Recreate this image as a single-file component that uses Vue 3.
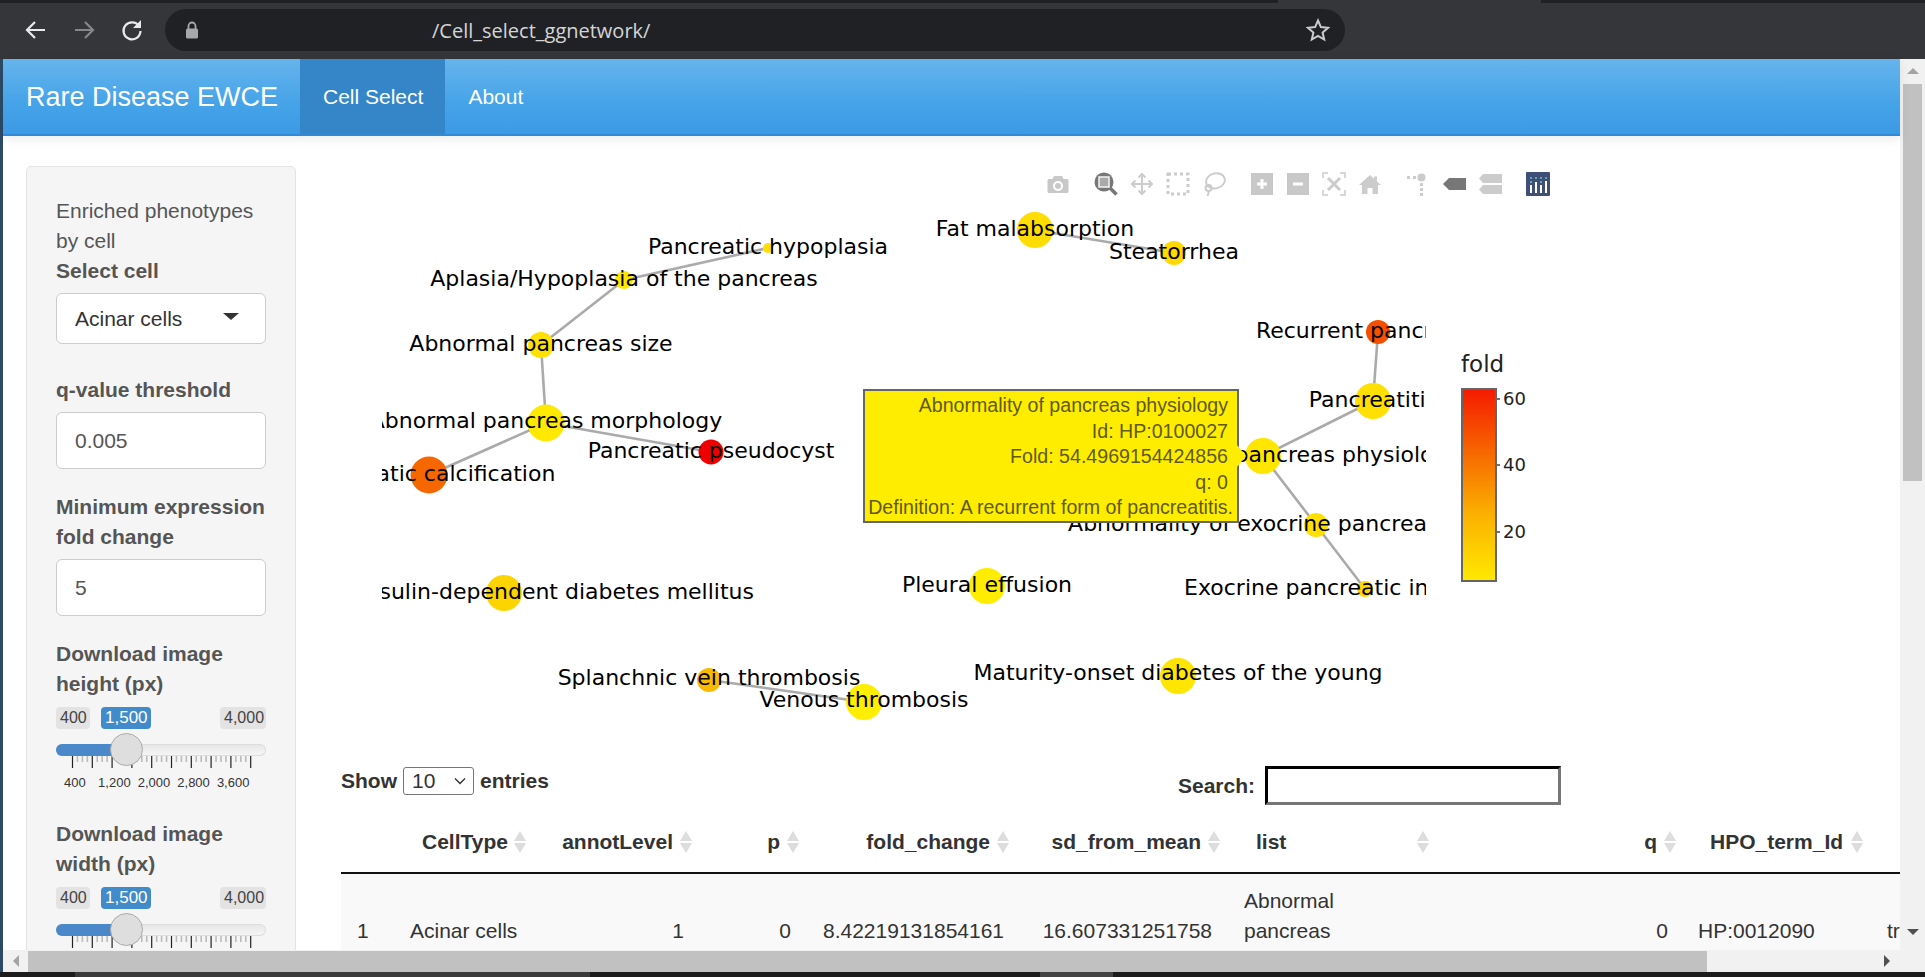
<template>
  <div class="screen">
    <!-- browser toolbar -->
    <div class="chrome">
      <div class="tabstrip"><div class="tab-notch"></div></div>
      <div class="toolbar">
        <svg class="cicon" viewBox="0 0 24 24"><path d="M21 12H4M11 4l-8 8 8 8" fill="none" stroke="#e8eaed" stroke-width="2.2" /></svg>
        <svg class="cicon" viewBox="0 0 24 24"><path d="M3 12h17M13 4l8 8-8 8" fill="none" stroke="#85878a" stroke-width="2.2" /></svg>
        <svg class="cicon" viewBox="0 0 24 24">
          <path d="M19 8a8.5 8.5 0 1 0 1.5 5" fill="none" stroke="#e8eaed" stroke-width="2.2" />
          <path d="M21 2v8h-8z" fill="#e8eaed" />
        </svg>
        <div class="address">
          <svg class="lock" viewBox="0 0 14 18">
            <path d="M3.5 8V5a3.5 3.5 0 0 1 7 0v3" fill="none" stroke="#a6a8ab" stroke-width="1.8" />
            <rect x="1" y="7.5" width="12" height="10" rx="1.5" fill="#a6a8ab" />
          </svg>
          <span class="url">/Cell_select_ggnetwork/</span>
          <svg class="star" viewBox="0 0 24 24">
            <path d="M12 2.5l2.9 6.6 7.1.7-5.4 4.7 1.6 7-6.2-3.7-6.2 3.7 1.6-7L2 9.8l7.1-.7z" fill="none" stroke="#c9cbce" stroke-width="2" />
          </svg>
        </div>
      </div>
    </div>

    <div class="window">
      <div class="strip"></div>
      <div class="page">
        <nav class="navbar">
          <span class="brand">Rare Disease EWCE</span>
          <a class="tab active">Cell Select</a>
          <a class="tab">About</a>
        </nav>

        <div class="content">
          <aside class="panel">
            <p class="intro">Enriched phenotypes<br />by cell</p>
            <label class="lbl">Select cell</label>
            <div class="dropdown">
              <span>Acinar cells</span>
              <i class="caret"></i>
            </div>

            <label class="lbl spaced">q-value threshold</label>
            <input class="field" value="0.005" />

            <label class="lbl spaced2">Minimum expression<br />fold change</label>
            <input class="field" value="5" />

            <div v-for="s in sliders" :key="s.label" class="slider-block">
              <label class="lbl">Download image<br />{{ s.label }}</label>
              <div class="pills">
                <span class="pill min">400</span>
                <span class="pill val">1,500</span>
                <span class="pill max">4,000</span>
              </div>
              <div class="rail">
                <div class="rail-fill"></div>
                <div class="handle"></div>
              </div>
              <svg class="ticks" width="210" height="12">
                <line
                  v-for="t in ticks"
                  :key="t.x"
                  :x1="t.x"
                  :x2="t.x"
                  y1="0"
                  :y2="t.major ? 12 : 6"
                  :stroke="t.major ? '#222' : '#bbb'"
                  :stroke-width="t.major ? 1.2 : 1.6"
                />
              </svg>
              <div class="tick-labels">
                <span v-for="l in tickLabels" :key="l">{{ l }}</span>
              </div>
            </div>
          </aside>

          <main class="main">
            <div class="plot">
              <svg class="net" width="1559" height="610" viewBox="341 136 1559 610">
                <defs>
                  <clipPath id="netclip"><rect x="382" y="160" width="1044" height="590" /></clipPath>
                  <linearGradient id="foldbar" x1="0" y1="0" x2="0" y2="1">
                    <stop offset="0" stop-color="#f51a00" />
                    <stop offset="0.35" stop-color="#f76c00" />
                    <stop offset="0.65" stop-color="#fbb000" />
                    <stop offset="1" stop-color="#ffe900" />
                  </linearGradient>
                </defs>
                <g clip-path="url(#netclip)">
                  <line
                    v-for="e in edgeLines"
                    :key="e.id"
                    :x1="e.x1"
                    :y1="e.y1"
                    :x2="e.x2"
                    :y2="e.y2"
                    stroke="#aaa"
                    stroke-width="2.6"
                  />
                  <circle v-for="n in nodes" :key="n.id" :cx="n.x" :cy="n.y" :r="n.r" :fill="n.c" />
                  <text
                    v-for="n in nodes"
                    :key="n.id + '-t'"
                    class="node-label"
                    :x="n.lx || n.x"
                    :y="n.y + (n.dy || 6)"
                    :text-anchor="n.lx ? 'end' : 'middle'"
                  >{{ n.label }}</text>
                </g>
                <text class="legend-title" x="1461" y="372">fold</text>
                <rect x="1462" y="389" width="34" height="192" fill="url(#foldbar)" stroke="#666" stroke-width="2" />
                <g v-for="t in legendTicks" :key="t.v">
                  <line x1="1497" x2="1500" :y1="t.y" :y2="t.y" stroke="#444" stroke-width="1.5" />
                  <text class="legend-tick" x="1503" :y="t.y + 6">{{ t.v }}</text>
                </g>
              </svg>

              <div class="modebar">
                <div class="mb-group">
                  <svg class="mb" viewBox="0 0 24 24">
                    <path d="M8 4h8l1.5 3H21a1.5 1.5 0 0 1 1.5 1.5v11A1.5 1.5 0 0 1 21 21H3a1.5 1.5 0 0 1-1.5-1.5v-11A1.5 1.5 0 0 1 3 7h3.5z" fill="#c8c8c8" />
                    <circle cx="12" cy="14" r="5" fill="#fff" />
                    <circle cx="12" cy="14" r="3" fill="#c8c8c8" />
                  </svg>
                </div>
                <div class="mb-group">
                  <svg class="mb" viewBox="0 0 24 24">
                    <path d="M16 16l6.5 6.5" stroke="#777" stroke-width="3.5" />
                    <circle cx="10" cy="10" r="9.5" fill="#777" />
                    <rect x="5" y="5" width="10" height="10" fill="#aaa" stroke="#eee" stroke-width="1.6" />
                  </svg>
                  <svg class="mb" viewBox="0 0 24 24">
                    <path d="M12 2v20M2 12h20M8.5 5.5L12 2l3.5 3.5M8.5 18.5L12 22l3.5-3.5M5.5 8.5L2 12l3.5 3.5M18.5 8.5L22 12l-3.5 3.5" fill="none" stroke="#ccc" stroke-width="2" />
                  </svg>
                  <svg class="mb" viewBox="0 0 24 24">
                    <rect x="2" y="2" width="20" height="20" fill="none" stroke="#ccc" stroke-width="3" stroke-dasharray="3 3" />
                  </svg>
                  <svg class="mb" viewBox="0 0 24 24">
                    <ellipse cx="13.5" cy="9" rx="9.5" ry="7.5" fill="none" stroke="#ccc" stroke-width="2" transform="rotate(-15 13 9)" />
                    <circle cx="6.5" cy="16" r="3" fill="none" stroke="#ccc" stroke-width="2" />
                    <path d="M7 19l-1.5 5" stroke="#ccc" stroke-width="2" />
                  </svg>
                </div>
                <div class="mb-group">
                  <svg class="mb" viewBox="0 0 24 24">
                    <rect x="1" y="1" width="22" height="22" fill="#c8c8c8" />
                    <path d="M12 7v10M7 12h10" stroke="#fff" stroke-width="3" />
                  </svg>
                  <svg class="mb" viewBox="0 0 24 24">
                    <rect x="1" y="1" width="22" height="22" fill="#c8c8c8" />
                    <path d="M7 12h10" stroke="#fff" stroke-width="3" />
                  </svg>
                  <svg class="mb" viewBox="0 0 24 24">
                    <path d="M6 1H1v5M18 1h5v5M6 23H1v-5M18 23h5v-5" fill="none" stroke="#ccc" stroke-width="1.5" />
                    <path d="M6 6l12 12M18 6L6 18" stroke="#ccc" stroke-width="3" />
                  </svg>
                  <svg class="mb" viewBox="0 0 24 24">
                    <path d="M12 3L1 13h3v9h5.5v-6h5v6H20v-9h3l-4-3.6V4.5h-3v2.2z" fill="#ccc" />
                  </svg>
                </div>
                <div class="mb-group">
                  <svg class="mb" viewBox="0 0 24 24">
                    <rect x="1" y="4" width="3" height="3" fill="#ccc" />
                    <rect x="7" y="4" width="3" height="3" fill="#ccc" />
                    <circle cx="15.5" cy="5.5" r="4" fill="#ccc" />
                    <rect x="14" y="11" width="3" height="3" fill="#ccc" />
                    <rect x="14" y="16" width="3" height="3" fill="#ccc" />
                    <rect x="14" y="21" width="3" height="3" fill="#ccc" />
                  </svg>
                  <svg class="mb" viewBox="0 0 24 24">
                    <path d="M1 12l6-6h17v12H7z" fill="#777" />
                  </svg>
                  <svg class="mb" viewBox="0 0 24 24">
                    <path d="M5 2h19v9H5L1 6.5zM5 13h19v9H5l-4-4.5z" fill="#ccc" />
                  </svg>
                </div>
                <div class="mb-group">
                  <svg class="mb" viewBox="0 0 24 24">
                    <rect width="24" height="24" rx="1" fill="#3f4f75" />
                    <g fill="#69c8c8">
                      <circle cx="5" cy="6" r="1" /><circle cx="10" cy="6" r="1" /><circle cx="15" cy="6" r="1" /><circle cx="20" cy="6" r="1" />
                    </g>
                    <g fill="#69c8c8"><circle cx="5" cy="10" r="1" /><circle cx="15" cy="10" r="1" /></g>
                    <path d="M5 13v8M10 10v11M15 13v8M20 9v12" stroke="#fff" stroke-width="2" />
                  </svg>
                </div>
              </div>

              <div class="hover">
                <div>Abnormality of pancreas physiology</div>
                <div>Id: HP:0100027</div>
                <div>Fold: 54.4969154424856</div>
                <div>q: 0</div>
                <div>Definition: A recurrent form of pancreatitis.</div>
              </div>
            </div>

            <div class="dt-controls">
              <div class="dt-length">
                Show
                <span class="dt-select">
                  10
                  <svg width="14" height="9" viewBox="0 0 14 9"><path d="M2 1.5l5 5 5-5" fill="none" stroke="#333" stroke-width="1.4" /></svg>
                </span>
                entries
              </div>
              <div class="dt-search">
                Search:
                <input class="dt-input" />
              </div>
            </div>

            <table class="dt">
              <colgroup>
                <col v-for="c in columns" :key="c.key" :style="{ width: c.w + 'px' }" />
              </colgroup>
              <thead>
                <tr>
                  <th v-for="c in columns" :key="c.key" :class="[c.key, { num: c.num, sortable: c.sort }]">
                    {{ c.title }}
                  </th>
                </tr>
              </thead>
              <tbody>
                <tr>
                  <td>1</td>
                  <td>Acinar cells</td>
                  <td class="num">1</td>
                  <td class="num">0</td>
                  <td class="num">8.42219131854161</td>
                  <td class="num">16.607331251758</td>
                  <td><span class="wrap">Abnormal pancreas morphology</span></td>
                  <td class="num">0</td>
                  <td class="hpo">HP:0012090</td>
                  <td>tr</td>
                </tr>
              </tbody>
            </table>
          </main>
        </div>

        <div class="hscroll">
          <span class="hbtn"><i class="arr-left"></i></span>
          <div class="hthumb"></div>
          <i class="arr-right"></i>
        </div>
      </div>

      <div class="vscroll">
        <i class="arr-up"></i>
        <div class="vthumb"></div>
        <i class="arr-down"></i>
      </div>
    </div>

    <div class="taskbar">
      <span class="tb-a"></span>
      <span class="tb-b"></span>
      <span class="tb-c"></span>
      <span class="tb-d"></span>
    </div>
  </div>
</template>

<script setup>
import { computed } from "vue";

const sliders = [{ label: "height (px)" }, { label: "width (px)" }];
const tickLabels = ["400", "1,200", "2,000", "2,800", "3,600"];

// major tick every 19.8px, three minor ticks in between
const ticks = [];
for (let i = 0; i < 37; i++) {
  ticks.push({ x: 16.5 + i * 4.95, major: i % 4 === 0 });
}

const legendTicks = [
  { v: 60, y: 399 },
  { v: 40, y: 465 },
  { v: 20, y: 532 },
];

// node positions are page coordinates, the svg viewBox is set up to match
const nodes = [
  { id: "hypo", x: 768, y: 248, r: 5, c: "#ffdf00", label: "Pancreatic hypoplasia" },
  { id: "aplasia", x: 624, y: 280, r: 9, c: "#ffe600", label: "Aplasia/Hypoplasia of the pancreas" },
  { id: "size", x: 541, y: 345, r: 13, c: "#ffe100", label: "Abnormal pancreas size" },
  { id: "morph", x: 546, y: 423, r: 18.5, c: "#ffe900", label: "Abnormal pancreas morphology", dy: 5 },
  { id: "calc", x: 429, y: 475, r: 18.5, c: "#f76700", label: "Pancreatic calcification" },
  { id: "pseudo", x: 711, y: 452, r: 12.5, c: "#ee0000", label: "Pancreatic pseudocyst" },
  { id: "fat", x: 1035, y: 230, r: 18, c: "#ffdd00", label: "Fat malabsorption" },
  { id: "steat", x: 1174, y: 253, r: 12, c: "#ffd900", label: "Steatorrhea" },
  { id: "recur", x: 1378, y: 332, r: 12, c: "#f74f00", label: "Recurrent pancreatitis" },
  { id: "pancr", x: 1373, y: 401, r: 18, c: "#ffe000", label: "Pancreatitis" },
  { id: "physio", x: 1263, y: 456, r: 18, c: "#ffe600", label: "Abnormality of pancreas physiology" },
  { id: "exo", x: 1316, y: 525, r: 12, c: "#ffe000", label: "Abnormality of exocrine pancreas physiology" },
  { id: "insuff", x: 1365, y: 589, r: 8, c: "#ffd800", label: "Exocrine pancreatic insufficiency" },
  { id: "pleural", x: 987, y: 586, r: 18, c: "#ffed00", label: "Pleural effusion" },
  { id: "insulin", x: 504, y: 593, r: 18, c: "#fcd500", label: "Noninsulin-dependent diabetes mellitus", lx: 754 },
  { id: "splanch", x: 709, y: 680, r: 12, c: "#fbb900", label: "Splanchnic vein thrombosis", dy: 5 },
  { id: "venous", x: 864, y: 702, r: 18, c: "#ffee00", label: "Venous thrombosis", dy: 5 },
  { id: "mody", x: 1178, y: 676, r: 18, c: "#ffe600", label: "Maturity-onset diabetes of the young", dy: 4 },
];

const edges = [
  ["hypo", "aplasia"],
  ["aplasia", "size"],
  ["size", "morph"],
  ["morph", "calc"],
  ["morph", "pseudo"],
  ["fat", "steat"],
  ["recur", "pancr"],
  ["pancr", "physio"],
  ["physio", "exo"],
  ["exo", "insuff"],
  ["splanch", "venous"],
];

const edgeLines = computed(() =>
  edges.map(([a, b]) => {
    const from = nodes.find((n) => n.id === a);
    const to = nodes.find((n) => n.id === b);
    return { id: a + b, x1: from.x, y1: from.y, x2: to.x, y2: to.y };
  })
);

const columns = [
  { key: "row", title: "", w: 53 },
  { key: "cell", title: "CellType", w: 140, sort: true },
  { key: "annot", title: "annotLevel", w: 166, num: true, sort: true },
  { key: "p", title: "p", w: 107, num: true, sort: true },
  { key: "fold", title: "fold_change", w: 210, num: true, sort: true },
  { key: "sd", title: "sd_from_mean", w: 211, num: true, sort: true },
  { key: "list", title: "list", w: 209, sort: true },
  { key: "q", title: "q", w: 247, num: true, sort: true },
  { key: "hpo", title: "HPO_term_Id", w: 187, sort: true },
  { key: "rest", title: "", w: 200 },
];
</script>

<style scoped>
.screen {
  width: 1925px;
  height: 977px;
  display: flex;
  flex-direction: column;
  overflow: hidden;
  background: #fff;
  font-family: "Liberation Sans", Arial, sans-serif;
  font-size: 21px;
  color: #555;
}

/* browser */
.chrome {
  height: 59px;
  flex: none;
  background: #35363a;
}
.tabstrip {
  height: 3px;
  background: #202124;
}
.tab-notch {
  width: 263px;
  height: 3px;
  margin-left: 1278px;
  background: #35363a;
}
.toolbar {
  display: flex;
  align-items: center;
  gap: 24px;
  height: 54px;
  padding-left: 24px;
}
.cicon {
  width: 24px;
  height: 24px;
}
.address {
  display: flex;
  align-items: center;
  width: 1180px;
  height: 42px;
  margin-left: -3px;
  border-radius: 21px;
  background: #202124;
}
.lock {
  width: 14px;
  height: 18px;
  margin-left: 20px;
}
.url {
  margin-left: 233px;
  font-family: "Open Sans", sans-serif;
  font-size: 20px;
  color: #d4d5d7;
}
.star {
  width: 24px;
  height: 24px;
  margin-left: auto;
  margin-right: 15px;
}

.window {
  flex: 1;
  display: flex;
  min-height: 0;
}
.strip {
  width: 3px;
  flex: none;
  background: #2c4a66;
}
.page {
  flex: 1;
  min-width: 0;
  display: flex;
  flex-direction: column;
}

/* navbar */
.navbar {
  flex: none;
  display: flex;
  align-items: flex-start;
  height: 75px;
  border-bottom: 2px solid #3189d8;
  background: linear-gradient(#66b4ec, #45a3e8 60%, #3b9ae4);
  box-shadow: 0 3px 10px rgba(0, 0, 0, 0.08);
  color: #fff;
  position: relative;
}
.brand {
  width: 297px;
  padding-left: 23px;
  box-sizing: border-box;
  line-height: 76px;
  font-size: 27px;
}
.tab {
  padding: 0 23px;
  line-height: 75px;
}
.tab.active {
  background: #3585c9;
  padding-right: 22px;
}

.content {
  flex: 1;
  display: flex;
  align-items: flex-start;
  min-height: 0;
  overflow: hidden;
}

/* sidebar */
.panel {
  flex: none;
  box-sizing: border-box;
  width: 270px;
  margin: 30px 45px 0 23px;
  padding: 29px 29px 0;
  border: 1px solid #e3e3e3;
  border-radius: 5px;
  background: #f5f5f5;
  line-height: 30px;
}
.intro {
  margin: 0;
}
.lbl {
  display: block;
  font-weight: 700;
}
.spaced {
  margin-top: 31px;
}
.spaced2 {
  margin-top: 23px;
}
.dropdown {
  display: flex;
  align-items: center;
  justify-content: space-between;
  box-sizing: border-box;
  height: 51px;
  margin-top: 7px;
  padding: 0 26px 0 18px;
  border: 1px solid #ccc;
  border-radius: 6px;
  background: #fff;
  color: #333;
}
.caret {
  width: 0;
  height: 0;
  margin-bottom: 5px;
  border-left: 8px solid transparent;
  border-right: 8px solid transparent;
  border-top: 7px solid #333;
}
.field {
  display: block;
  box-sizing: border-box;
  width: 100%;
  height: 57px;
  margin-top: 7px;
  padding: 0 18px;
  border: 1px solid #ccc;
  border-radius: 6px;
  background: #fff;
  color: #555;
  font: inherit;
}
.slider-block {
  height: 180px;
  padding-top: 23px;
  box-sizing: border-box;
}
.pills {
  display: flex;
  height: 22px;
  margin-top: 8px;
  font-size: 16px;
  line-height: 22px;
}
.pill {
  padding: 0 4px;
  border-radius: 4px;
  background: #e3e3e3;
  color: #444;
  text-align: center;
}
.pill.min {
  width: 34px;
  box-sizing: border-box;
}
.pill.val {
  width: 50px;
  box-sizing: border-box;
  margin-left: 11px;
  background: #428bca;
  color: #fff;
  font-size: 17px;
}
.pill.max {
  margin-left: auto;
  width: 46px;
  box-sizing: border-box;
}
.rail {
  position: relative;
  height: 12px;
  margin-top: 15px;
  border-radius: 6px;
  background: linear-gradient(#e6e6e6, #f6f6f6);
  box-shadow: inset 0 0 0 1px #ddd;
}
.rail-fill {
  width: 71px;
  height: 12px;
  border-radius: 6px 0 0 6px;
  background: #4a88c9;
}
.handle {
  position: absolute;
  left: 54px;
  top: -11px;
  box-sizing: border-box;
  width: 33px;
  height: 33px;
  border: 1px solid #aaa;
  border-radius: 50%;
  background: #dedede;
}
.ticks {
  display: block;
}
.tick-labels {
  display: flex;
  margin-left: -1px;
  font-size: 13px;
  line-height: 18px;
  margin-top: 6px;
  color: #333;
}
.tick-labels span {
  flex: none;
  width: 39.6px;
  text-align: center;
}

/* main column */
.main {
  flex: 1;
  min-width: 0;
  overflow: hidden;
}
.plot {
  position: relative;
  height: 610px;
}
.net {
  display: block;
}
.node-label {
  font-family: "DejaVu Sans", sans-serif;
  font-size: 22px;
  fill: #000;
}
.legend-title {
  font-family: "DejaVu Sans", sans-serif;
  font-size: 23px;
  fill: #222;
}
.legend-tick {
  font-family: "DejaVu Sans", sans-serif;
  font-size: 18px;
  fill: #222;
}
.modebar {
  position: absolute;
  left: 705px;
  top: 36px;
  display: flex;
  gap: 24px;
}
.mb-group {
  display: flex;
  gap: 12px;
}
.mb {
  display: block;
  width: 24px;
  height: 24px;
}
.hover {
  position: absolute;
  left: 522px;
  top: 253px;
  box-sizing: border-box;
  width: 376px;
  height: 134px;
  padding: 2px 3px 0 0;
  border: 2px solid #666;
  background: #ffed00;
  color: #5f5a10;
  font-size: 19.6px;
  line-height: 25.5px;
  text-align: right;
  white-space: nowrap;
}
.hover div {
  padding-right: 6px;
}
.hover div:last-child {
  padding-right: 1px;
}
.hover::after {
  content: "";
  position: absolute;
  left: 100%;
  top: 54px;
  border-top: 11px solid transparent;
  border-bottom: 11px solid transparent;
  border-left: 9px solid #ffed00;
}

/* data table */
.dt-controls {
  display: flex;
  justify-content: space-between;
  align-items: flex-start;
  width: 1220px;
  height: 66px;
  padding-top: 20px;
  box-sizing: border-box;
  color: #333;
  font-weight: 700;
  font-size: 21px;
}
.dt-length {
  display: flex;
  align-items: center;
  gap: 6px;
  height: 30px;
}
.dt-select {
  display: inline-flex;
  align-items: center;
  justify-content: space-between;
  box-sizing: border-box;
  width: 71px;
  height: 28px;
  padding: 0 6px 0 8px;
  border: 1px solid #767676;
  border-radius: 3px;
  background: #fff;
  font-weight: 400;
}
.dt-search {
  display: flex;
  align-items: center;
  gap: 10px;
  height: 39px;
}
.dt-input {
  box-sizing: border-box;
  width: 296px;
  height: 39px;
  border: 3px inset #767676;
  border-top-color: #222;
  border-left-color: #222;
  border-right-color: #767676;
  border-bottom-color: #767676;
  background: #fff;
}
.dt {
  table-layout: fixed;
  width: 1730px;
  border-collapse: collapse;
  color: #333;
  font-size: 21px;
}
.dt th {
  position: relative;
  box-sizing: border-box;
  height: 61px;
  padding: 0 27px 0 28px;
  border-bottom: 2px solid #111;
  font-weight: 700;
  text-align: left;
  white-space: nowrap;
}
.dt th.hpo {
  padding-left: 26px;
}
.dt th.sortable::before,
.dt th.sortable::after {
  content: "";
  position: absolute;
  right: 8px;
  border-left: 6px solid transparent;
  border-right: 6px solid transparent;
}
.dt th.sortable::before {
  top: 19px;
  border-bottom: 10px solid #ddd;
}
.dt th.sortable::after {
  top: 31px;
  border-top: 10px solid #ddd;
}
.dt .num {
  text-align: right;
}
.dt td {
  padding: 12px 16px;
  background: #f9f9f9;
  line-height: 30px;
  white-space: nowrap;
  overflow: hidden;
}
.dt td.hpo {
  padding-left: 14px;
}
.wrap {
  display: block;
  width: 130px;
  white-space: normal;
}

/* scrollbars */
.hscroll {
  flex: none;
  display: flex;
  align-items: center;
  height: 22px;
  background: #f1f1f1;
}
.hbtn {
  display: flex;
  align-items: center;
  justify-content: center;
  width: 25px;
  height: 22px;
}
.hthumb {
  width: 1679px;
  height: 21px;
  background: #c1c1c1;
}
.arr-left {
  border-top: 6px solid transparent;
  border-bottom: 6px solid transparent;
  border-right: 6px solid #a3a3a3;
}
.arr-right {
  margin-left: 177px;
  border-top: 6px solid transparent;
  border-bottom: 6px solid transparent;
  border-left: 6px solid #505050;
}
.vscroll {
  flex: none;
  display: flex;
  flex-direction: column;
  align-items: center;
  width: 25px;
  background: #f1f1f1;
}
.arr-up {
  margin-top: 9px;
  border-left: 6px solid transparent;
  border-right: 6px solid transparent;
  border-bottom: 6px solid #a3a3a3;
}
.vthumb {
  width: 19px;
  height: 397px;
  margin-top: 10px;
  background: #c1c1c1;
}
.arr-down {
  margin-top: 448px;
  border-left: 6px solid transparent;
  border-right: 6px solid transparent;
  border-top: 6px solid #505050;
}

.taskbar {
  flex: none;
  display: flex;
  height: 5px;
  background: #1c1c1c;
}
.tb-a {
  width: 75px;
}
.tb-b {
  width: 515px;
  background: #3a3a3a;
}
.tb-c {
  width: 450px;
}
.tb-d {
  width: 73px;
  background: #444;
}
</style>

<style>
html,
body {
  margin: 0;
  overflow: hidden;
}
</style>
